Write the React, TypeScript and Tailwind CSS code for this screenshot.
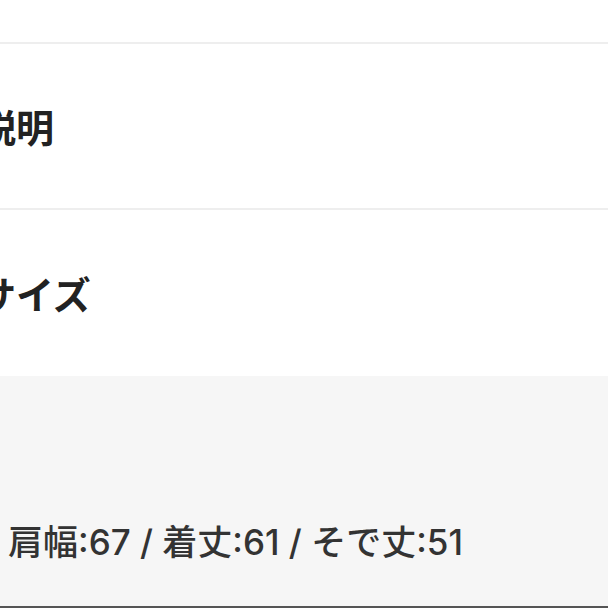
const sizes = [
  { label: "肩幅", value: 67 },
  { label: "着丈", value: 61 },
  { label: "そで丈", value: 51 },
];

const Heading = ({ text, divider }: { text: string; divider?: boolean }) => (
  <div
    className={
      divider
        ? "flex items-center h-[166px] shrink-0 border-b-2 border-[#eeeeee] overflow-hidden"
        : "flex items-center h-[166px] shrink-0 overflow-hidden"
    }
  >
    <h2 className="ml-[-98px] text-[38px] leading-none font-bold text-[#222222] whitespace-nowrap">
      {text}
    </h2>
  </div>
);

export default function App() {
  return (
    <div
      className="w-[608px] h-[608px] bg-white overflow-hidden flex flex-col"
      style={{ fontFamily: '"Noto Sans CJK JP", "Noto Sans", sans-serif' }}
    >
      <div className="h-[44px] shrink-0 border-b-2 border-[#eeeeee]" />
      <Heading text="商品説明" divider />
      <Heading text="商品サイズ" />
      <div className="flex-1 bg-[#f6f6f6] border-b-2 border-[#555555] flex flex-col">
        <p
          className="mt-[149px] pl-[8px] text-[35px] leading-none font-medium text-[#333333] whitespace-nowrap"
          style={{ fontFamily: 'Inter, "Noto Sans CJK JP", sans-serif' }}
        >
          {sizes.map((s, i) => (
            <span key={s.label}>
              {i > 0 && " / "}
              {s.label}:{s.value}
            </span>
          ))}
        </p>
      </div>
    </div>
  );
}
